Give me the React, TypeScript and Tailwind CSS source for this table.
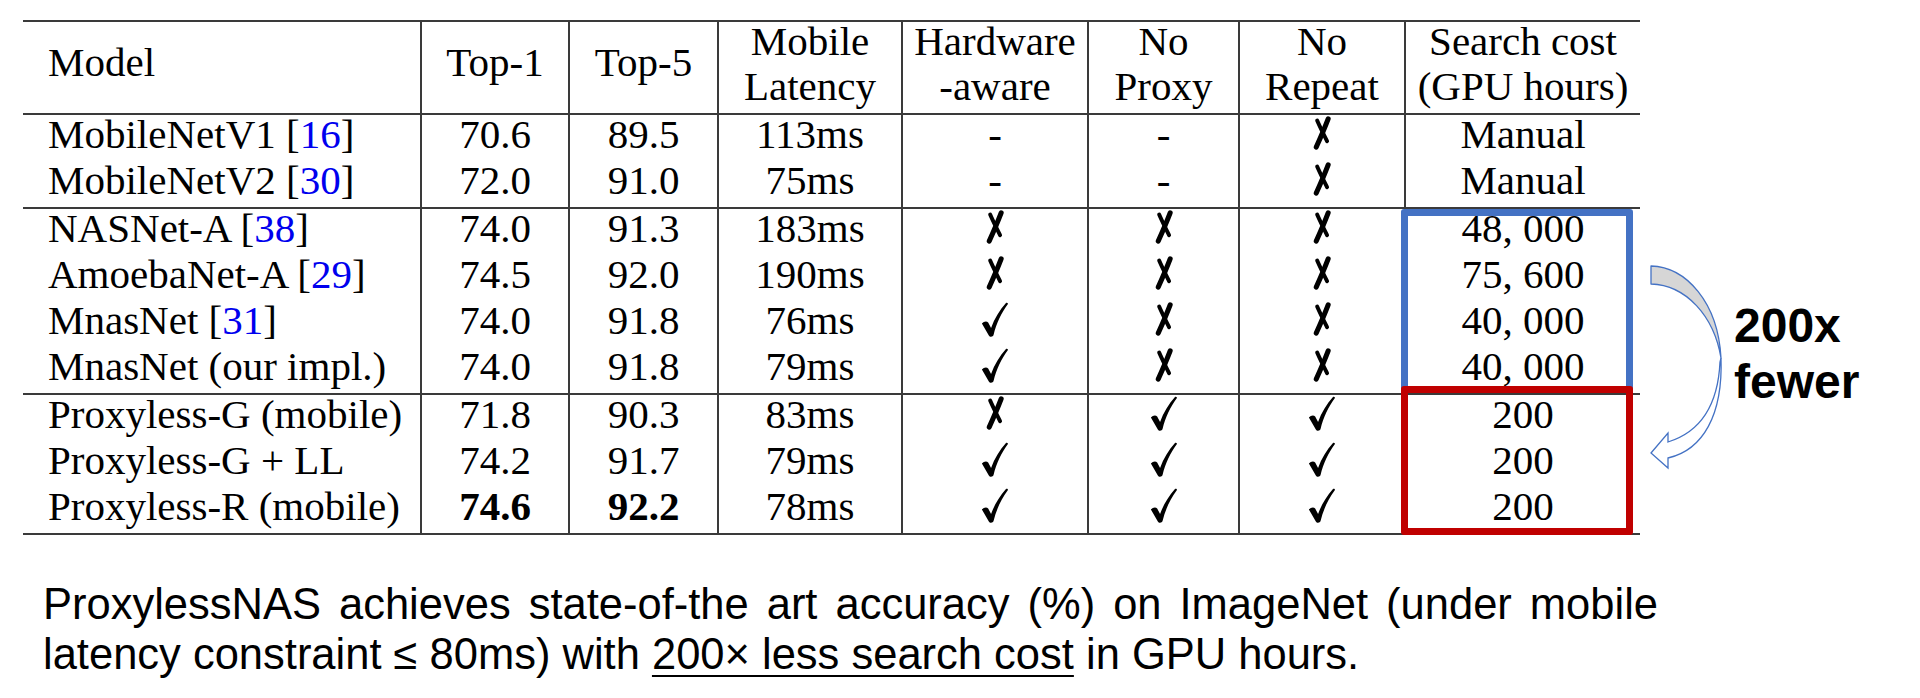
import React from "react";

const GRID =
  "grid grid-cols-[397px_148px_149px_184px_186px_151px_166px_236px]";

function XMark() {
  return (
    <svg width="22" height="36" viewBox="0 0 20 32" className="block">
      <path d="M15.6,3.2 C13,10 9,19.5 4.8,28.8" stroke="#000" strokeWidth="4.6" strokeLinecap="round" fill="none" />
      <path d="M5.6,4.6 C8.2,10.6 11.4,17 14.6,23.4" stroke="#000" strokeWidth="3.6" strokeLinecap="round" fill="none" />
    </svg>
  );
}

function Check() {
  return (
    <svg width="28" height="37" viewBox="0 0 25 33" className="block">
      <path
        d="M0.8,20 C2.6,17.9 5.2,17.6 6.4,19.2 L9,24 C12,15.8 16.6,8.2 22.3,1.8 C23.1,0.9 24.6,1.9 23.9,2.9 C18.3,10.6 13.8,19.6 11.2,30.4 C10.7,32.2 7.8,32.4 7,30.8 Z"
        fill="#000"
      />
    </svg>
  );
}

function Ref({ n }: { n: string }) {
  return (
    <>
      [<span className="text-[#0000ee]">{n}</span>]
    </>
  );
}

type Row = {
  m: React.ReactNode;
  t1: React.ReactNode;
  t5: React.ReactNode;
  lat: string;
  hw: string;
  np: string;
  nr: string;
  sc: string;
};

function Txt({ children }: { children: React.ReactNode }) {
  return (
    <span className="inline-block whitespace-nowrap leading-[46px] -translate-y-[4px]">
      {children}
    </span>
  );
}

function Sym({ v }: { v: string }) {
  if (v === "x")
    return (
      <span className="inline-flex -translate-y-[5px]">
        <XMark />
      </span>
    );
  if (v === "v")
    return (
      <span className="inline-flex -translate-y-[5px]">
        <Check />
      </span>
    );
  return <Txt>{v}</Txt>;
}

const groupA: Row[] = [
  { m: <>MobileNetV1 <Ref n="16" /></>, t1: "70.6", t5: "89.5", lat: "113ms", hw: "-", np: "-", nr: "x", sc: "Manual" },
  { m: <>MobileNetV2 <Ref n="30" /></>, t1: "72.0", t5: "91.0", lat: "75ms", hw: "-", np: "-", nr: "x", sc: "Manual" },
];

const groupB: Row[] = [
  { m: <>NASNet-A <Ref n="38" /></>, t1: "74.0", t5: "91.3", lat: "183ms", hw: "x", np: "x", nr: "x", sc: "48, 000" },
  { m: <>AmoebaNet-A <Ref n="29" /></>, t1: "74.5", t5: "92.0", lat: "190ms", hw: "x", np: "x", nr: "x", sc: "75, 600" },
  { m: <>MnasNet <Ref n="31" /></>, t1: "74.0", t5: "91.8", lat: "76ms", hw: "v", np: "x", nr: "x", sc: "40, 000" },
  { m: "MnasNet (our impl.)", t1: "74.0", t5: "91.8", lat: "79ms", hw: "v", np: "x", nr: "x", sc: "40, 000" },
];

const groupC: Row[] = [
  { m: "Proxyless-G (mobile)", t1: "71.8", t5: "90.3", lat: "83ms", hw: "x", np: "v", nr: "v", sc: "200" },
  { m: "Proxyless-G + LL", t1: "74.2", t5: "91.7", lat: "79ms", hw: "v", np: "v", nr: "v", sc: "200" },
  { m: "Proxyless-R (mobile)", t1: <b>74.6</b>, t5: <b>92.2</b>, lat: "78ms", hw: "v", np: "v", nr: "v", sc: "200" },
];

const cellC = "border-l-2 border-[#3a3a3a] flex items-center justify-center";

function DataRow({ r }: { r: Row }) {
  return (
    <div className={GRID + " h-[46px]"}>
      <div className="pl-[25px] flex items-center">
        <Txt>{r.m}</Txt>
      </div>
      <div className={cellC}><Txt>{r.t1}</Txt></div>
      <div className={cellC}><Txt>{r.t5}</Txt></div>
      <div className={cellC}><Txt>{r.lat}</Txt></div>
      <div className={cellC}><Sym v={r.hw} /></div>
      <div className={cellC}><Sym v={r.np} /></div>
      <div className={cellC}><Sym v={r.nr} /></div>
      <div className={cellC}><Txt>{r.sc}</Txt></div>
    </div>
  );
}

function Rule() {
  return <div className="h-[2px] bg-[#3a3a3a]" />;
}

function Two({ a, b }: { a: string; b: string }) {
  return (
    <div className="flex flex-col items-center -translate-y-[4px]">
      <span className="block h-[45px] leading-[45px] whitespace-nowrap">{a}</span>
      <span className="block h-[45px] leading-[45px] whitespace-nowrap">{b}</span>
    </div>
  );
}

function One({ children }: { children: React.ReactNode }) {
  return (
    <span className="inline-block leading-[45px] whitespace-nowrap -translate-y-[5px]">
      {children}
    </span>
  );
}

export default function App() {
  return (
    <div className="relative w-[1920px] h-[698px] bg-white overflow-hidden text-black">
      <div className="pt-[20px] pl-[23px]">
        <div className="w-[1617px] font-['Liberation_Serif',serif] text-[41px]">
          <Rule />
          <div className={GRID + " h-[91px]"}>
            <div className="pl-[25px] flex items-center">
              <One>Model</One>
            </div>
            <div className={cellC}><One>Top-1</One></div>
            <div className={cellC}><One>Top-5</One></div>
            <div className={cellC}><Two a="Mobile" b="Latency" /></div>
            <div className={cellC}><Two a="Hardware" b="-aware" /></div>
            <div className={cellC}><Two a="No" b="Proxy" /></div>
            <div className={cellC}><Two a="No" b="Repeat" /></div>
            <div className={cellC}><Two a="Search cost" b="(GPU hours)" /></div>
          </div>
          <Rule />
          {groupA.map((r, i) => (
            <DataRow key={"a" + i} r={r} />
          ))}
          <Rule />
          {groupB.map((r, i) => (
            <DataRow key={"b" + i} r={r} />
          ))}
          <Rule />
          {groupC.map((r, i) => (
            <DataRow key={"c" + i} r={r} />
          ))}
          <Rule />
        </div>

        <div className="mt-[44px] ml-[20px] w-[1615px] font-['Liberation_Sans',Arial,sans-serif] text-[43.5px] leading-[50px]">
          <div className="whitespace-nowrap text-justify [text-align-last:justify]">
            ProxylessNAS achieves state-of-the art accuracy (%) on ImageNet (under mobile
          </div>
          <div className="whitespace-nowrap">
            <span>latency constraint ≤ 80ms) with </span>
            <span className="underline decoration-2 underline-offset-[6px]">200× less search cost</span>
            <span> in GPU hours.</span>
          </div>
        </div>
      </div>

      {/* highlight boxes */}
      <div className="absolute left-[1401px] top-[209px] w-[232px] h-[184px] border-[7px] border-[#4472c4] rounded-[3px]" />
      <div className="absolute left-[1401px] top-[386px] w-[232px] h-[149px] border-[7px] border-[#c00000] rounded-[3px]" />

      {/* curved arrow */}
      <svg
        className="absolute left-[1600px] top-[250px]"
        width="140"
        height="230"
        viewBox="0 0 140 230"
      >
        <path
          d="M51,16 C86,17 118,52 121,108 C114,66 86,35 51,34 Z"
          fill="#d6d6d6"
          stroke="#4472c4"
          strokeWidth="1.3"
          strokeLinejoin="round"
        />
        <path
          d="M120,112 C118,155 100,182 68,192 L68,183 L51,203 L68,218 L68,208 C103,200 123,165 121,108 Z"
          fill="#ffffff"
          stroke="#4472c4"
          strokeWidth="1.3"
          strokeLinejoin="miter"
        />
      </svg>

      <div className="absolute left-[1734px] top-[298px] font-['Liberation_Sans',Arial,sans-serif] font-bold text-[48px] leading-[56px]">
        <div>200x</div>
        <div>fewer</div>
      </div>
    </div>
  );
}
